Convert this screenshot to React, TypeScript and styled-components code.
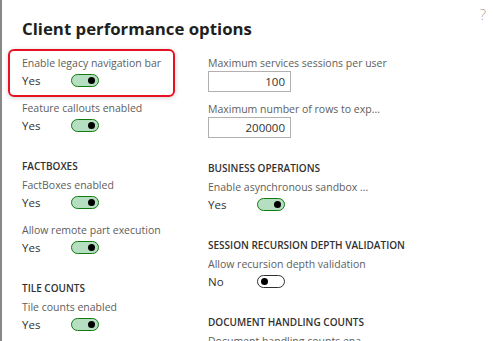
import styled, { createGlobalStyle } from 'styled-components';

const GlobalStyle = createGlobalStyle`
  html, body {
    margin: 0;
    padding: 0;
    background: #ffffff;
  }
  body {
    font-family: "Open Sans", "Noto Sans", sans-serif;
    color: #323130;
  }
`;

const Page = styled.div`
  position: relative;
  height: 341px;
  overflow: hidden;
  border-left: 2px solid #8a8886;
  box-sizing: border-box;
  padding: 16px 0 0 20px;
`;

const HelpMark = styled.span`
  position: absolute;
  top: 4px;
  right: 7px;
  font-size: 15px;
  font-weight: 300;
  color: #a19f9d;
`;

const Title = styled.h1`
  margin: 0 0 13px 0;
  font-size: 16.8px;
  font-weight: 700;
  line-height: 26px;
  color: #201f1e;
`;

const Columns = styled.div`
  display: grid;
  grid-template-columns: 186px 1fr;
`;

const Column = styled.div`
  display: flex;
  flex-direction: column;
`;

const Section = styled.div`
  display: flex;
  flex-direction: column;
  & + & {
    margin-top: 13px;
  }
`;

const Heading = styled.div`
  height: 16px;
  line-height: 16px;
  margin-bottom: 3px;
  font-size: 10px;
  font-weight: 600;
  text-transform: uppercase;
  white-space: nowrap;
  color: #323130;
`;

const FieldBox = styled.div<{ $highlight?: boolean }>`
  position: relative;
  margin-bottom: 9px;
  ${(p) =>
    p.$highlight &&
    `
    &::after {
      content: '';
      position: absolute;
      left: -14px;
      top: -6px;
      width: 167px;
      height: 48px;
      box-sizing: border-box;
      border: 2px solid #e81123;
      border-radius: 6px;
      box-shadow: 0 1px 5px rgba(0, 0, 0, 0.18);
      pointer-events: none;
    }
  `}
`;

const Label = styled.div`
  height: 16px;
  line-height: 16px;
  font-size: 10.5px;
  color: #605e5c;
  white-space: nowrap;
`;

const ValueRow = styled.div`
  display: flex;
  align-items: center;
  height: 20px;
  margin-top: -1px;
  margin-bottom: 1px;
`;

const ValueText = styled.span`
  width: 49px;
  font-size: 11.5px;
  color: #323130;
`;

const Toggle = styled.span<{ $on: boolean }>`
  position: relative;
  display: inline-block;
  width: 28px;
  height: 13px;
  box-sizing: border-box;
  border-radius: 7px;
  border: 1px solid ${(p) => (p.$on ? '#107c10' : '#323130')};
  background: ${(p) => (p.$on ? '#b6dec0' : '#ffffff')};

  &::after {
    content: '';
    position: absolute;
    top: 2px;
    ${(p) => (p.$on ? 'right: 3px;' : 'left: 3px;')}
    width: 7px;
    height: 7px;
    border-radius: 50%;
    background: #000000;
  }
`;

const NumberBox = styled.div`
  width: 83px;
  height: 21px;
  box-sizing: border-box;
  border: 1px solid #b3b0ad;
  padding: 0 5px;
  font-size: 11.5px;
  line-height: 19px;
  text-align: right;
  color: #323130;
`;

type Item =
  | { kind: 'toggle'; label: string; on: boolean; highlight?: boolean }
  | { kind: 'number'; label: string; value: string };

type Group = { heading?: string; items: Item[] };

const left: Group[] = [
  {
    items: [
      { kind: 'toggle', label: 'Enable legacy navigation bar', on: true, highlight: true },
      { kind: 'toggle', label: 'Feature callouts enabled', on: true },
    ],
  },
  {
    heading: 'Factboxes',
    items: [
      { kind: 'toggle', label: 'FactBoxes enabled', on: true },
      { kind: 'toggle', label: 'Allow remote part execution', on: true },
    ],
  },
  {
    heading: 'Tile counts',
    items: [{ kind: 'toggle', label: 'Tile counts enabled', on: true }],
  },
];

const right: Group[] = [
  {
    items: [
      { kind: 'number', label: 'Maximum services sessions per user', value: '100' },
      { kind: 'number', label: 'Maximum number of rows to exp...', value: '200000' },
    ],
  },
  {
    heading: 'Business operations',
    items: [{ kind: 'toggle', label: 'Enable asynchronous sandbox ...', on: true }],
  },
  {
    heading: 'Session recursion depth validation',
    items: [{ kind: 'toggle', label: 'Allow recursion depth validation', on: false }],
  },
  {
    heading: 'Document handling counts',
    items: [{ kind: 'toggle', label: 'Document handling counts ena...', on: true }],
  },
];

function Field({ item }: { item: Item }) {
  if (item.kind === 'number') {
    return (
      <FieldBox>
        <Label>{item.label}</Label>
        <NumberBox>{item.value}</NumberBox>
      </FieldBox>
    );
  }

  return (
    <FieldBox $highlight={item.highlight}>
      <Label>{item.label}</Label>
      <ValueRow>
        <ValueText>{item.on ? 'Yes' : 'No'}</ValueText>
        <Toggle $on={item.on} />
      </ValueRow>
    </FieldBox>
  );
}

function renderColumn(groups: Group[]) {
  return (
    <Column>
      {groups.map((g, i) => (
        <Section key={i}>
          {g.heading && <Heading>{g.heading}</Heading>}
          {g.items.map((item) => (
            <Field key={item.label} item={item} />
          ))}
        </Section>
      ))}
    </Column>
  );
}

function App() {
  return (
    <>
      <GlobalStyle />
      <Page>
        <HelpMark>?</HelpMark>
        <Title>Client performance options</Title>
        <Columns>
          {renderColumn(left)}
          {renderColumn(right)}
        </Columns>
      </Page>
    </>
  );
}

export default App;
